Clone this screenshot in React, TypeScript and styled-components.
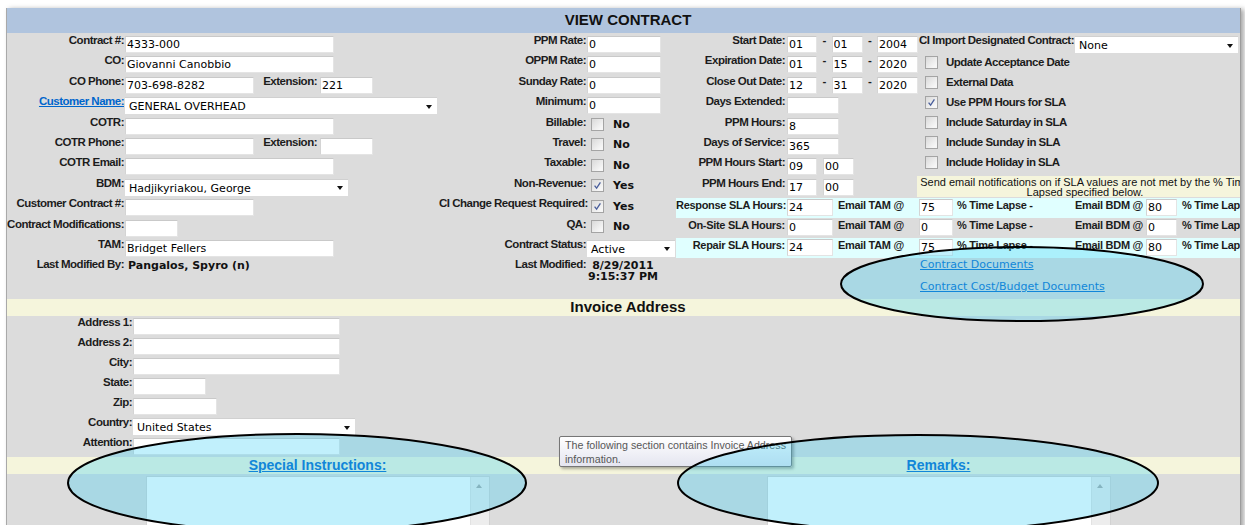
import React from 'react'
import styled, { createGlobalStyle, css } from 'styled-components'

const GlobalStyle = createGlobalStyle`
  html, body {
    margin: 0;
    padding: 0;
    background: #fff;
    overflow: hidden;
  }
  body {
    font-family: 'Liberation Sans', Arial, sans-serif;
  }
`

// bold, tight captions used for every form label
const labelFont = css`
  font-family: 'Liberation Sans', Arial, sans-serif;
  font-weight: bold;
  font-size: 11.5px;
  letter-spacing: -0.5px;
  line-height: 13px;
  color: #1c1c1c;
  white-space: nowrap;
`

const fieldFont = css`
  font-family: 'DejaVu Sans', Verdana, sans-serif;
  font-size: 11px;
  color: #000;
`

const ROW = 20.4

const Page = styled.div`
  position: relative;
  width: 1245px;
  height: 525px;
  padding: 8px 0 0 6px;
  box-sizing: border-box;
  overflow: hidden;
`

const Panel = styled.div`
  position: relative;
  width: 1235px;
  height: 530px;
  box-sizing: border-box;
  background: #dcdcdc;
  border-left: 1px solid #a9a9a9;
  border-right: 1px solid #9c9c9c;
  box-shadow: 3px 1px 5px rgba(0, 0, 0, 0.35);
  overflow: hidden;
`

const Sheet = styled.div`
  width: 1242px;
`

const TitleBar = styled.div`
  height: 25px;
  background: #b0c4de;
  text-align: center;
  font-family: 'Liberation Sans', Arial, sans-serif;
  font-weight: bold;
  font-size: 15px;
  line-height: 23px;
  color: #111;
`

const TopSection = styled.div`
  display: flex;
  height: 266px;
  padding-top: 1px;
  box-sizing: border-box;
`

const Column = styled.div<{ $w: number }>`
  flex: none;
  width: ${p => p.$w}px;
`

const FormRow = styled.div<{ $h?: number }>`
  display: flex;
  align-items: flex-start;
  height: ${p => p.$h ?? ROW}px;
`

const FieldLabel = styled.div<{ $w?: number; $pad?: number }>`
  ${labelFont};
  flex: none;
  width: ${p => (p.$w ? `${p.$w}px` : 'auto')};
  padding-right: ${p => p.$pad ?? 1}px;
  box-sizing: border-box;
  text-align: right;
`

const LabelLink = styled.a`
  color: #0066cc;
  text-decoration: underline;
`

const TextField = styled.input<{ $w: number; $top?: number }>`
  ${fieldFont};
  flex: none;
  width: ${p => p.$w}px;
  height: 17px;
  box-sizing: border-box;
  margin: ${p => p.$top ?? 2}px 0 0;
  padding: 0 1px;
  background: #fff;
  border: 1px solid #e4e4e4;
  border-top-color: #c9c9c9;
  border-left-color: #d4d4d4;
  border-radius: 0;
  outline: none;
`

const SelectBox = styled.div<{ $w: number }>`
  ${fieldFont};
  flex: none;
  display: flex;
  align-items: center;
  justify-content: space-between;
  width: ${p => p.$w}px;
  height: 17px;
  box-sizing: border-box;
  margin-top: 2px;
  padding: 1px 5px 0 4px;
  background: #fff;
  border-top: 1px solid #d0d0d0;
`

const Caret = styled.span`
  width: 0;
  height: 0;
  border-left: 3px solid transparent;
  border-right: 3px solid transparent;
  border-top: 4px solid #111;
`

const Dash = styled.span`
  ${labelFont};
  flex: none;
  width: 14.5px;
  text-align: center;
`

const Gap = styled.span<{ $w: number }>`
  flex: none;
  width: ${p => p.$w}px;
`

const CheckGroup = styled.div`
  display: flex;
  align-items: center;
  height: 13px;
  margin: 2.5px 0 0 4px;
`

const Box = styled.span`
  flex: none;
  display: inline-flex;
  align-items: center;
  justify-content: center;
  width: 13px;
  height: 13px;
  box-sizing: border-box;
  border: 1px solid #a4a4a4;
  background: linear-gradient(135deg, #d9d9d9 0%, #f6f6f6 80%);
`

const Flag = styled.span`
  font-family: 'DejaVu Sans', Verdana, sans-serif;
  font-weight: bold;
  font-size: 11px;
  margin-left: 9px;
  color: #111;
`

const Stamp = styled.div<{ $left?: number; $center?: boolean }>`
  font-family: 'DejaVu Sans', Verdana, sans-serif;
  font-weight: bold;
  font-size: 11px;
  line-height: 11px;
  padding-top: 1.5px;
  margin-left: ${p => p.$left ?? 3}px;
  text-align: ${p => (p.$center ? 'center' : 'left')};
  color: #111;
  white-space: nowrap;
`

const RightBlock = styled.div`
  flex: 1;
  min-width: 0;
`

const Upper = styled.div`
  display: flex;
  height: 164px;
`

const OptionsCol = styled.div`
  flex: 1;
`

const OptionRow = styled.div`
  display: flex;
  align-items: center;
  height: 20.1px;
  padding-left: 13px;
`

const OptionText = styled.span`
  ${labelFont};
  margin-left: 8px;
`

const Notice = styled.div`
  width: 336px;
  height: 21px;
  margin: 3.5px 0 0 5px;
  padding-top: 0.5px;
  box-sizing: border-box;
  background: #f5f5dc;
  font-family: 'Liberation Sans', Arial, sans-serif;
  font-size: 11px;
  line-height: 10.5px;
  text-align: center;
  white-space: nowrap;
  color: #111;
`

const SlaRow = styled.div<{ $band: boolean }>`
  display: grid;
  grid-template-columns: 111px 51px 81px 38px 118px 71px 36px 1fr;
  height: 20px;
  background: ${p => (p.$band ? '#e0ffff' : 'transparent')};
`

const SlaText = styled.div<{ $right?: boolean }>`
  font-family: 'Liberation Sans', Arial, sans-serif;
  font-weight: bold;
  font-size: 11px;
  letter-spacing: -0.3px;
  line-height: 13px;
  padding-top: 0.5px;
  padding-right: ${p => (p.$right ? 2 : 0)}px;
  text-align: ${p => (p.$right ? 'right' : 'left')};
  white-space: nowrap;
  color: #1c1c1c;
`

const DocLinks = styled.div`
  display: flex;
  flex-direction: column;
  gap: 8px;
  padding-left: 244px;
`

const DocLink = styled.a`
  font-family: 'DejaVu Sans', Verdana, sans-serif;
  font-size: 11px;
  line-height: 14px;
  color: #0066cc;
  text-decoration: underline;
  white-space: nowrap;
`

const SectionBar = styled.div`
  height: 17px;
  background: #f5f5dc;
  text-align: center;
  font-family: 'Liberation Sans', Arial, sans-serif;
  font-weight: bold;
  font-size: 15px;
  line-height: 15px;
  color: #111;
`

const AddressForm = styled.div`
  margin-bottom: 1px;
`

const SplitBar = styled.div`
  display: flex;
  height: 17px;
  background: #f5f5dc;
`

const BarHalf = styled.div`
  flex: 1;
  text-align: center;
  font-family: 'Liberation Sans', Arial, sans-serif;
  font-weight: bold;
  font-size: 14px;
  line-height: 17px;
`

const BarLink = styled.a`
  color: #0066cc;
  text-decoration: underline;
`

const NotesRow = styled.div`
  display: flex;
  padding-top: 2px;
`

const NoteHalf = styled.div`
  flex: 1;
  display: flex;
  justify-content: center;
`

const NoteBox = styled.div`
  display: flex;
  width: 344px;
  height: 60px;
  box-sizing: border-box;
  border: 1px solid #d2d2d2;
  background: #fff;
`

const NoteArea = styled.textarea`
  flex: 1;
  border: none;
  resize: none;
  outline: none;
  background: #fff;
  ${fieldFont};
`

const ScrollRail = styled.div`
  position: relative;
  width: 18px;
  background: #ededed;
  border-left: 1px solid #e2e2e2;
  &::after {
    content: '';
    position: absolute;
    top: 7px;
    left: 5px;
    border-left: 3.5px solid transparent;
    border-right: 3.5px solid transparent;
    border-bottom: 4px solid #a9a9a9;
  }
`

const Tooltip = styled.div`
  position: absolute;
  left: 559px;
  top: 436px;
  width: 233px;
  height: 31px;
  box-sizing: border-box;
  padding: 2px 5px;
  border: 1px solid #767676;
  border-radius: 2px;
  background: linear-gradient(#ffffff, #e4e5f0);
  box-shadow: 2px 2px 3px rgba(0, 0, 0, 0.3);
  font-family: 'Liberation Sans', Arial, sans-serif;
  font-size: 10.7px;
  line-height: 13.5px;
  color: #575757;
  white-space: nowrap;
`

const Annotations = styled.svg`
  position: absolute;
  left: 0;
  top: 0;
  pointer-events: none;
`

function Check({ on }: { on?: boolean }) {
  return (
    <Box>
      {on && (
        <svg width="11" height="11" viewBox="0 0 11 11">
          <path d="M2.6 5.6 L4.6 8.2 L8.4 2.4" fill="none" stroke="#4a5f9c" strokeWidth="1.3" />
        </svg>
      )}
    </Box>
  )
}

function Select({ w, value }: { w: number; value: string }) {
  return (
    <SelectBox $w={w}>
      <span>{value}</span>
      <Caret />
    </SelectBox>
  )
}

const flags: [string, boolean][] = [
  ['Billable:', false],
  ['Travel:', false],
  ['Taxable:', false],
  ['Non-Revenue:', true],
  ['CI Change Request Required:', true],
  ['QA:', false],
]

const dates: [string, string, string, string][] = [
  ['Start Date:', '01', '01', '2004'],
  ['Expiration Date:', '01', '15', '2020'],
  ['Close Out Date:', '12', '31', '2020'],
]

const options: [string, boolean][] = [
  ['Update Acceptance Date', false],
  ['External Data', false],
  ['Use PPM Hours for SLA', true],
  ['Include Saturday in SLA', false],
  ['Include Sunday in SLA', false],
  ['Include Holiday in SLA', false],
]

const slaRows = [
  { label: 'Response SLA Hours:', hours: '24', tam: '75', bdm: '80', band: true },
  { label: 'On-Site SLA Hours:', hours: '0', tam: '0', bdm: '0', band: false },
  { label: 'Repair SLA Hours:', hours: '24', tam: '75', bdm: '80', band: true },
]

const addressRows: [string, number][] = [
  ['Address 1:', 207],
  ['Address 2:', 207],
  ['City:', 207],
  ['State:', 73],
  ['Zip:', 84],
]

export default function App() {
  return (
    <Page>
      <GlobalStyle />
      <Panel>
        <Sheet>
          <TitleBar>VIEW CONTRACT</TitleBar>
          <TopSection>
            <Column $w={432}>
              <FormRow>
                <FieldLabel $w={118}>Contract #:</FieldLabel>
                <TextField $w={209} defaultValue="4333-000" />
              </FormRow>
              <FormRow>
                <FieldLabel $w={118}>CO:</FieldLabel>
                <TextField $w={209} defaultValue="Giovanni Canobbio" />
              </FormRow>
              <FormRow>
                <FieldLabel $w={118}>CO Phone:</FieldLabel>
                <TextField $w={129} defaultValue="703-698-8282" />
                <FieldLabel $w={66} $pad={3}>Extension:</FieldLabel>
                <TextField $w={53} defaultValue="221" />
              </FormRow>
              <FormRow>
                <FieldLabel $w={118}>
                  <LabelLink href="#">Customer Name:</LabelLink>
                </FieldLabel>
                <Select w={312} value="GENERAL OVERHEAD" />
              </FormRow>
              <FormRow>
                <FieldLabel $w={118}>COTR:</FieldLabel>
                <TextField $w={209} />
              </FormRow>
              <FormRow>
                <FieldLabel $w={118}>COTR Phone:</FieldLabel>
                <TextField $w={129} />
                <FieldLabel $w={66} $pad={3}>Extension:</FieldLabel>
                <TextField $w={53} />
              </FormRow>
              <FormRow>
                <FieldLabel $w={118}>COTR Email:</FieldLabel>
                <TextField $w={209} />
              </FormRow>
              <FormRow>
                <FieldLabel $w={118}>BDM:</FieldLabel>
                <Select w={223} value="Hadjikyriakou, George" />
              </FormRow>
              <FormRow>
                <FieldLabel $w={118}>Customer Contract #:</FieldLabel>
                <TextField $w={129} />
              </FormRow>
              <FormRow>
                <FieldLabel $w={118}>Contract Modifications:</FieldLabel>
                <TextField $w={53} />
              </FormRow>
              <FormRow>
                <FieldLabel $w={118}>TAM:</FieldLabel>
                <TextField $w={209} defaultValue="Bridget Fellers" />
              </FormRow>
              <FormRow>
                <FieldLabel $w={118}>Last Modified By:</FieldLabel>
                <Stamp $left={3}>Pangalos, Spyro (n)</Stamp>
              </FormRow>
            </Column>

            <Column $w={237}>
              {['PPM Rate:', 'OPPM Rate:', 'Sunday Rate:', 'Minimum:'].map(label => (
                <FormRow key={label}>
                  <FieldLabel $w={148}>{label}</FieldLabel>
                  <TextField $w={74} defaultValue="0" />
                </FormRow>
              ))}
              {flags.map(([label, on]) => (
                <FormRow key={label}>
                  <FieldLabel $w={148}>{label}</FieldLabel>
                  <CheckGroup>
                    <Check on={on} />
                    <Flag>{on ? 'Yes' : 'No'}</Flag>
                  </CheckGroup>
                </FormRow>
              ))}
              <FormRow>
                <FieldLabel $w={148}>Contract Status:</FieldLabel>
                <Select w={88} value="Active" />
              </FormRow>
              <FormRow>
                <FieldLabel $w={148}>Last Modified:</FieldLabel>
                <Stamp $left={1} $center>
                  8/29/2011
                  <br />
                  9:15:37 PM
                </Stamp>
              </FormRow>
            </Column>

            <RightBlock>
              <Upper>
                <Column $w={236}>
                  {dates.map(([label, m, d, y]) => (
                    <FormRow key={label}>
                      <FieldLabel $w={111} $pad={2}>{label}</FieldLabel>
                      <TextField $w={30} defaultValue={m} />
                      <Dash>-</Dash>
                      <TextField $w={31} defaultValue={d} />
                      <Dash>-</Dash>
                      <TextField $w={41} defaultValue={y} />
                    </FormRow>
                  ))}
                  <FormRow>
                    <FieldLabel $w={111} $pad={2}>Days Extended:</FieldLabel>
                    <TextField $w={52} />
                  </FormRow>
                  <FormRow>
                    <FieldLabel $w={111} $pad={2}>PPM Hours:</FieldLabel>
                    <TextField $w={52} defaultValue="8" />
                  </FormRow>
                  <FormRow>
                    <FieldLabel $w={111} $pad={2}>Days of Service:</FieldLabel>
                    <TextField $w={52} defaultValue="365" />
                  </FormRow>
                  <FormRow>
                    <FieldLabel $w={111} $pad={2}>PPM Hours Start:</FieldLabel>
                    <TextField $w={30} defaultValue="09" />
                    <Gap $w={6} />
                    <TextField $w={31} defaultValue="00" />
                  </FormRow>
                  <FormRow>
                    <FieldLabel $w={111} $pad={2}>PPM Hours End:</FieldLabel>
                    <TextField $w={30} defaultValue="17" />
                    <Gap $w={6} />
                    <TextField $w={31} defaultValue="00" />
                  </FormRow>
                </Column>

                <OptionsCol>
                  <FormRow $h={18}>
                    <FieldLabel $w={163} $pad={1}>CI Import Designated Contract:</FieldLabel>
                    <Select w={163} value="None" />
                  </FormRow>
                  {options.map(([text, on]) => (
                    <OptionRow key={text}>
                      <Check on={on} />
                      <OptionText>{text}</OptionText>
                    </OptionRow>
                  ))}
                  <Notice>
                    Send email notifications on if SLA values are not met by the % Time
                    <br />
                    Lapsed specified below.
                  </Notice>
                </OptionsCol>
              </Upper>

              {slaRows.map(row => (
                <SlaRow key={row.label} $band={row.band}>
                  <SlaText $right>{row.label}</SlaText>
                  <TextField $w={46} $top={1} defaultValue={row.hours} />
                  <SlaText>Email TAM @</SlaText>
                  <TextField $w={34} $top={1} defaultValue={row.tam} />
                  <SlaText>% Time Lapse -</SlaText>
                  <SlaText>Email BDM @</SlaText>
                  <TextField $w={31} $top={1} defaultValue={row.bdm} />
                  <SlaText>% Time Lapse -</SlaText>
                </SlaRow>
              ))}

              <DocLinks>
                <DocLink href="#">Contract Documents</DocLink>
                <DocLink href="#">Contract Cost/Budget Documents</DocLink>
              </DocLinks>
            </RightBlock>
          </TopSection>

          <SectionBar>Invoice Address</SectionBar>
          <AddressForm>
            {addressRows.map(([label, w]) => (
              <FormRow key={label} $h={20}>
                <FieldLabel $w={126}>{label}</FieldLabel>
                <TextField $w={w} />
              </FormRow>
            ))}
            <FormRow $h={20}>
              <FieldLabel $w={126}>Country:</FieldLabel>
              <Select w={222} value="United States" />
            </FormRow>
            <FormRow $h={20}>
              <FieldLabel $w={126}>Attention:</FieldLabel>
              <TextField $w={207} />
            </FormRow>
          </AddressForm>

          <SplitBar>
            <BarHalf>
              <BarLink href="#">Special Instructions:</BarLink>
            </BarHalf>
            <BarHalf>
              <BarLink href="#">Remarks:</BarLink>
            </BarHalf>
          </SplitBar>
          <NotesRow>
            <NoteHalf>
              <NoteBox>
                <NoteArea />
                <ScrollRail />
              </NoteBox>
            </NoteHalf>
            <NoteHalf>
              <NoteBox>
                <NoteArea />
                <ScrollRail />
              </NoteBox>
            </NoteHalf>
          </NotesRow>
        </Sheet>
      </Panel>

      <Tooltip>
        The following section contains Invoice Address
        <br />
        information.
      </Tooltip>

      <Annotations width="1245" height="525" viewBox="0 0 1245 525">
        <g fill="rgba(54, 207, 245, 0.31)" stroke="#000" strokeWidth="2">
          <ellipse cx="1022" cy="284" rx="181" ry="37" />
          <ellipse cx="297" cy="483" rx="229" ry="49" />
          <ellipse cx="918" cy="483" rx="240" ry="48" />
        </g>
      </Annotations>
    </Page>
  )
}
